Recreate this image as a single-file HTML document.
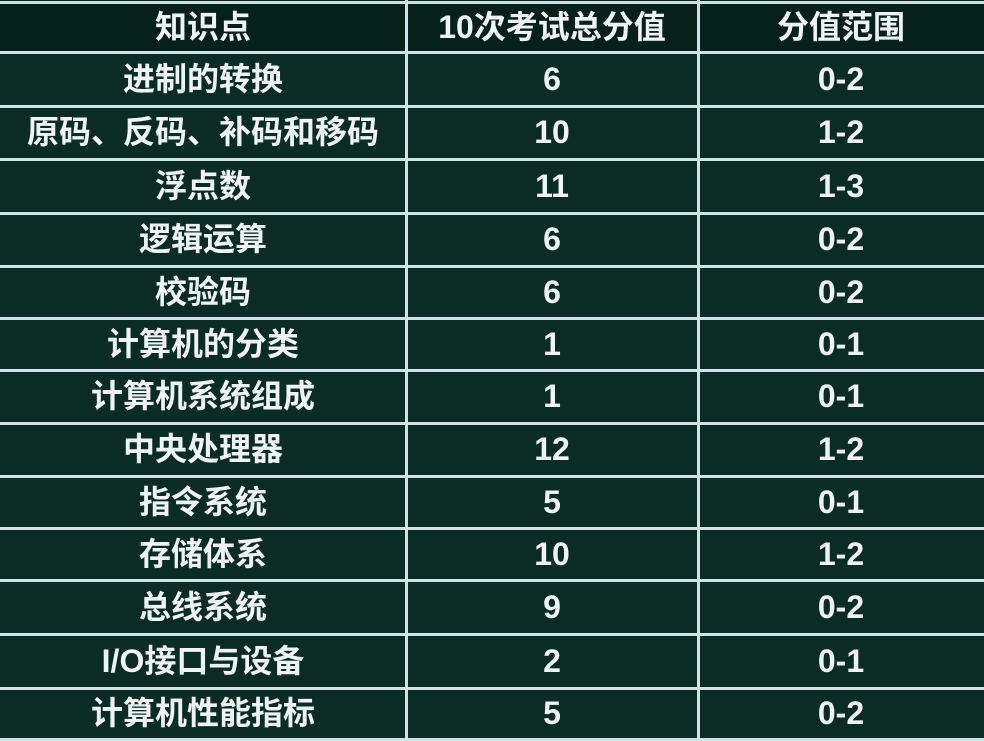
<!DOCTYPE html>
<html><head><meta charset="utf-8"><style>
body{margin:0;width:984px;height:739px;overflow:hidden;background:#0b2c24;font-family:"Liberation Sans","Noto Sans CJK SC",sans-serif;font-weight:bold;color:#eef4f4;position:relative}
.h{position:absolute;left:0;width:984px;height:3px;background:#cfe2e8}
.v{position:absolute;top:0;height:739px;width:3px;background:#cfe2e8}
.c{position:absolute;text-align:center;font-size:32px;white-space:nowrap}
.hdr{position:absolute;left:0;top:0;width:984px;height:52px;background:#06201a}
</style></head><body>
<div class="hdr"></div>
<div id="t"></div>
<script>
var rows=[["知识点","10次考试总分值","分值范围"],["进制的转换","6","0-2"],["原码、反码、补码和移码","10","1-2"],["浮点数","11","1-3"],["逻辑运算","6","0-2"],["校验码","6","0-2"],["计算机的分类","1","0-1"],["计算机系统组成","1","0-1"],["中央处理器","12","1-2"],["指令系统","5","0-1"],["存储体系","10","1-2"],["总线系统","9","0-2"],["I/O接口与设备","2","0-1"],["计算机性能指标","5","0-2"]];
var lines=[1,51,105,158,212,265,317,369,422,475,527,579,633,687,738];
var xs=[[0,406],[406,698],[698,984]];
var h="";
lines.forEach(function(y){h+='<div class="h" style="top:'+y+'px"></div>';});
h+='<div class="v" style="left:405px"></div><div class="v" style="left:697px"></div>';
rows.forEach(function(r,i){var t=lines[i]+2,hh=lines[i+1]-t;
r.forEach(function(s,j){h+='<div class="c" style="top:'+t+'px;height:'+hh+'px;line-height:'+hh+'px;left:'+xs[j][0]+'px;width:'+(xs[j][1]-xs[j][0])+'px">'+s+'</div>';});});
document.getElementById("t").innerHTML=h;
</script>
</body></html>
